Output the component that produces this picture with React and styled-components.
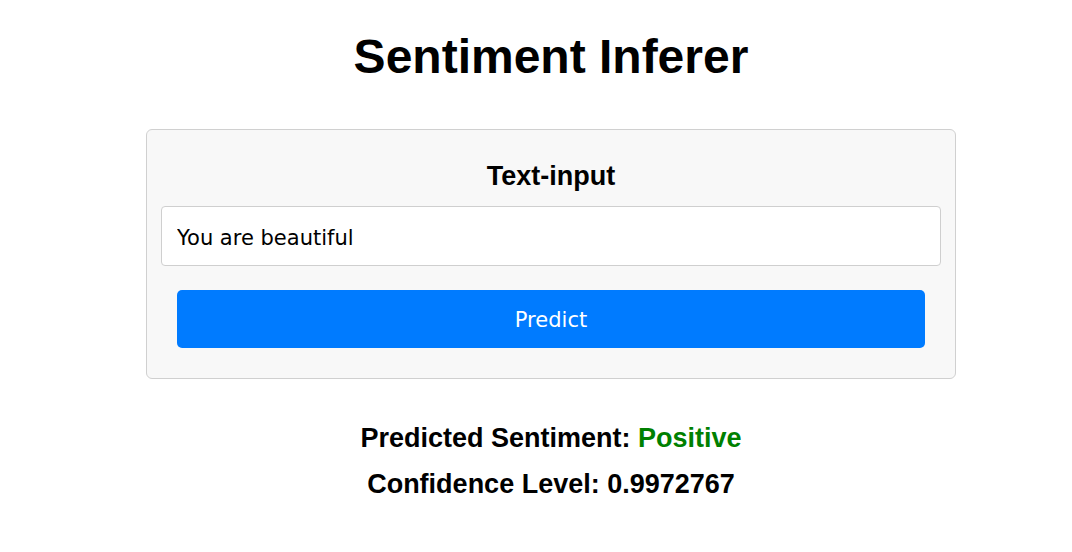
import React, { useState } from "react";
import styled, { createGlobalStyle } from "styled-components";

const GlobalStyle = createGlobalStyle`
  body {
    margin: 0;
    background: #ffffff;
    font-family: "Liberation Sans", Arial, sans-serif;
  }
`;

function App() {
  const [text, setText] = useState("You are beautiful");

  return (
    <Page>
      <GlobalStyle />
      <Title>Sentiment Inferer</Title>
      <Card>
        <Label>Text-input</Label>
        <TextInput value={text} onChange={(e) => setText(e.target.value)} />
        <PredictButton>Predict</PredictButton>
      </Card>
      <Results>
        <ResultLine>
          Predicted Sentiment: <Sentiment>Positive</Sentiment>
        </ResultLine>
        <ResultLine>Confidence Level: 0.9972767</ResultLine>
      </Results>
    </Page>
  );
}

const Page = styled.div`
  display: flex;
  flex-direction: column;
  align-items: center;
  padding: 29px 0 0 30px;
`;

const Title = styled.h1`
  margin: 0 0 45px;
  font-size: 48px;
  font-weight: bold;
  color: #000;
`;

const Card = styled.div`
  box-sizing: border-box;
  width: 810px;
  padding: 15px;
  background: #f8f8f8;
  border: 1px solid #d0d0d0;
  border-radius: 6px;
  display: flex;
  flex-direction: column;
  align-items: center;
`;

const Label = styled.h2`
  margin: 16px 0 14px;
  font-size: 27px;
  font-weight: bold;
  color: #000;
`;

const TextInput = styled.input`
  box-sizing: border-box;
  width: 780px;
  height: 60px;
  margin: 0 -16px;
  padding: 3px 15px 0;
  border: 1px solid #cfcfcf;
  border-radius: 4px;
  background: #fff;
  font-family: "DejaVu Sans", Tahoma, sans-serif;
  font-size: 21px;
  color: #000;
  outline: none;
`;

const PredictButton = styled.button`
  box-sizing: border-box;
  width: 748px;
  height: 58px;
  margin: 24px 0 15px;
  padding-top: 2px;
  border: none;
  border-radius: 5px;
  background: #007bff;
  color: #fff;
  font-family: "DejaVu Sans", Tahoma, sans-serif;
  font-size: 21px;
  cursor: pointer;
`;

const Results = styled.div`
  margin-top: 29px;
  display: flex;
  flex-direction: column;
  align-items: center;
`;

const ResultLine = styled.p`
  margin: 15px 0 0;
  font-size: 27px;
  font-weight: bold;
  color: #000;
`;

const Sentiment = styled.span`
  color: #008000;
`;

export default App;
